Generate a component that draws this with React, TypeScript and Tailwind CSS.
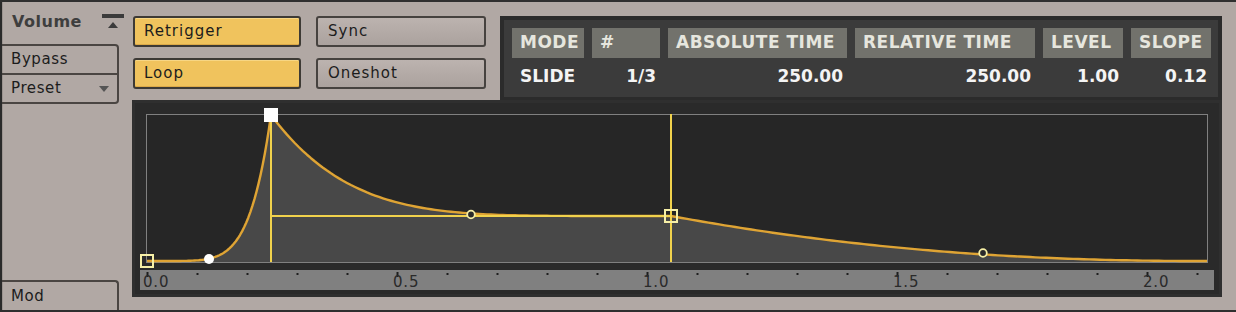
import type { ReactNode } from 'react'

const cols = [
  { head: 'MODE', value: 'SLIDE', left: true },
  { head: '#', value: '1/3' },
  { head: 'ABSOLUTE TIME', value: '250.00' },
  { head: 'RELATIVE TIME', value: '250.00' },
  { head: 'LEVEL', value: '1.00' },
  { head: 'SLOPE', value: '0.12' },
]

const rulerLabels = [
  { text: '0.0', x: 3 },
  { text: '0.5', x: 253 },
  { text: '1.0', x: 503 },
  { text: '1.5', x: 753 },
  { text: '2.0', x: 1003 },
]

// envelope in graph-local coords (graph box is 1062 x 148)
function envelopePoints() {
  const pts: string[] = []
  for (let i = 0; i <= 60; i++) {
    const t = i / 60
    pts.push(`${(1 + 124 * t).toFixed(2)},${(147 - 146 * Math.pow(t, 6)).toFixed(2)}`)
  }
  for (let i = 1; i <= 100; i++) {
    const t = i / 100
    pts.push(`${(125 + 400 * t).toFixed(2)},${(102 - 101 * Math.pow(1 - t, 5.3)).toFixed(2)}`)
  }
  for (let i = 1; i <= 100; i++) {
    const t = i / 100
    pts.push(`${(525 + 536 * t).toFixed(2)},${(147 - 45 * Math.pow(1 - t, 2.2)).toFixed(2)}`)
  }
  return pts
}

function YellowButton({ children }: { children: ReactNode }) {
  return (
    <div className="h-[31px] flex items-center pl-[9px] rounded-[3px] border-2 border-[#3d3a35] bg-[#f0c35d] shadow-[inset_0_1px_0_#f7d684,inset_0_-1px_0_#dcaa48] text-[15px] tracking-[1px] text-[#1c1c1c]">
      {children}
    </div>
  )
}

function GreyButton({ children }: { children: ReactNode }) {
  return (
    <div className="h-[31px] flex items-center pl-[10px] rounded-[3px] border-2 border-[#46423f] bg-gradient-to-b from-[#bcb3af] to-[#aba29e] text-[15px] tracking-[1px] text-[#1c1c1c]">
      {children}
    </div>
  )
}

function Envelope() {
  const pts = envelopePoints()
  const line = 'M' + pts.join(' L')
  const fill = line + ' L1061,148 L1,148 Z'
  return (
    <svg width={1062} height={148} className="block overflow-visible">
      <rect x={0.5} y={0.5} width={1061} height={148} fill="#262626" stroke="#808080" />
      <path d={fill} fill="#484848" />
      <path d={line} fill="none" stroke="#dfa434" strokeWidth={2.4} strokeLinejoin="round" />
      <line x1={125} y1={1} x2={125} y2={148} stroke="#f1d24c" strokeWidth={2} />
      <line x1={125} y1={102} x2={525} y2={102} stroke="#f1d24c" strokeWidth={2} />
      <line x1={525} y1={0} x2={525} y2={148} stroke="#f1d24c" strokeWidth={2} />
      <rect x={-5} y={141} width={12} height={12} fill="none" stroke="#f6efa6" strokeWidth={2} />
      <circle cx={63} cy={145} r={5} fill="#ffffff" />
      <rect x={118} y={-6} width={14} height={14} fill="#ffffff" />
      <circle cx={325} cy={100.5} r={3.8} fill="#2a2a2a" stroke="#f6efa6" strokeWidth={1.8} />
      <rect x={519} y={96} width={12} height={12} fill="none" stroke="#f6efa6" strokeWidth={2} />
      <circle cx={837} cy={139} r={3.8} fill="#2a2a2a" stroke="#f6efa6" strokeWidth={1.8} />
    </svg>
  )
}

function Ruler() {
  const ticks = Array.from({ length: 22 }, (_, k) => k)
  return (
    <div className="relative w-[1074px] h-[20px] bg-[#808080]">
      <svg width={1074} height={20} className="block">
        {ticks.map(k =>
          k % 5 === 0
            ? <rect key={k} x={6.5 + 50 * k} y={2} width={2} height={5} fill="#1e1e1e" />
            : <rect key={k} x={6.5 + 50 * k} y={3} width={2} height={2} fill="#1e1e1e" />
        )}
      </svg>
      {rulerLabels.map(l => (
        <span
          key={l.text}
          className="absolute top-[5px] text-[15px] leading-[15px] tracking-[0.8px] text-[#2a2a2a]"
          style={{ left: l.x }}
        >
          {l.text}
        </span>
      ))}
    </div>
  )
}

export default function App() {
  return (
    <div className="w-[1236px] h-[312px] flex overflow-hidden bg-[#b1a8a4] border-t-2 border-b-2 border-[#2f2f2f] font-['DejaVu_Sans',sans-serif] text-[#1c1c1c]">
      {/* Left column */}
      <div className="w-[120px] h-full shrink-0 flex flex-col border-l-2 border-[#2a2a2a] shadow-[inset_1px_0_0_#9c9490]">
        <div className="h-[42px] flex items-start pl-[10px] pt-[8px] relative">
          <span className="font-bold text-[16px] tracking-[0.5px] text-[#3e3e3e]">Volume</span>
          <svg width={22} height={15} className="absolute left-[100px] top-[12px] overflow-visible">
            <rect x={0} y={0} width={22} height={4} fill="#3b3b3b" />
            <path d="M6 14 L11 8 L16 14 Z" fill="#3b3b3b" />
          </svg>
        </div>
        <div className="w-[117px] h-[60px] flex flex-col border-t-2 border-r-2 border-b-2 border-[#4a4542] rounded-r-[4px]">
          <div className="h-[29px] flex items-center pl-[9px] border-b-2 border-[#4a4542] text-[15px] tracking-[0.6px]">Bypass</div>
          <div className="flex-1 flex items-center justify-between pl-[9px] pr-[8px] text-[15px] tracking-[0.6px]">
            <span>Preset</span>
            <svg width={10} height={6}><path d="M0 0 L10 0 L5 6 Z" fill="#555" /></svg>
          </div>
        </div>
        <div className="flex-1" />
        <div className="w-[117px] h-[30px] flex items-center pl-[9px] border-t-2 border-r-2 border-[#4a4542] rounded-tr-[4px] text-[15px] tracking-[0.6px]">
          Mod
        </div>
      </div>

      {/* Main */}
      <div className="flex-1 flex flex-col">
        <div className="h-[98px] flex shrink-0">
          <div className="ml-[13px] mt-[14px] grid grid-cols-[168px_170px] gap-x-[15px] gap-y-[11px] h-[73px]">
            <YellowButton>Retrigger</YellowButton>
            <GreyButton>Sync</GreyButton>
            <YellowButton>Loop</YellowButton>
            <GreyButton>Oneshot</GreyButton>
          </div>
          <div className="ml-[14px] mt-[14px] w-[722px] h-[84px] bg-[#2b2b2b] pt-[4px] px-[4px] pb-[3px]">
            <div className="h-full bg-[#3b3b3b] pl-[8px] pt-[8px]">
              <div className="grid grid-cols-[72px_68px_179px_180px_80px_80px] gap-x-[8px] font-bold text-[17px]">
                {cols.map(c => (
                  <div key={c.head} className="h-[30px] flex items-center pl-[8px] bg-[#72726c] text-[#e6e6de] tracking-[0.5px] whitespace-nowrap">
                    {c.head}
                  </div>
                ))}
                {cols.map(c => (
                  <div
                    key={c.head + 'v'}
                    className={`h-[38px] flex items-center text-[#f4f4f4] ${c.left ? 'pl-[8px] justify-start' : 'pr-[4px] justify-end'}`}
                  >
                    {c.value}
                  </div>
                ))}
              </div>
            </div>
          </div>
        </div>

        {/* Envelope editor */}
        <div className="ml-[12px] w-[1090px] h-[197px] border-[3px] border-[#2f2f2f] bg-[#2a2a2a] flex flex-col">
          <div className="ml-[11px] mt-[11px]">
            <Envelope />
          </div>
          <div className="ml-[5px] mt-[8px]">
            <Ruler />
          </div>
        </div>
      </div>
    </div>
  )
}
